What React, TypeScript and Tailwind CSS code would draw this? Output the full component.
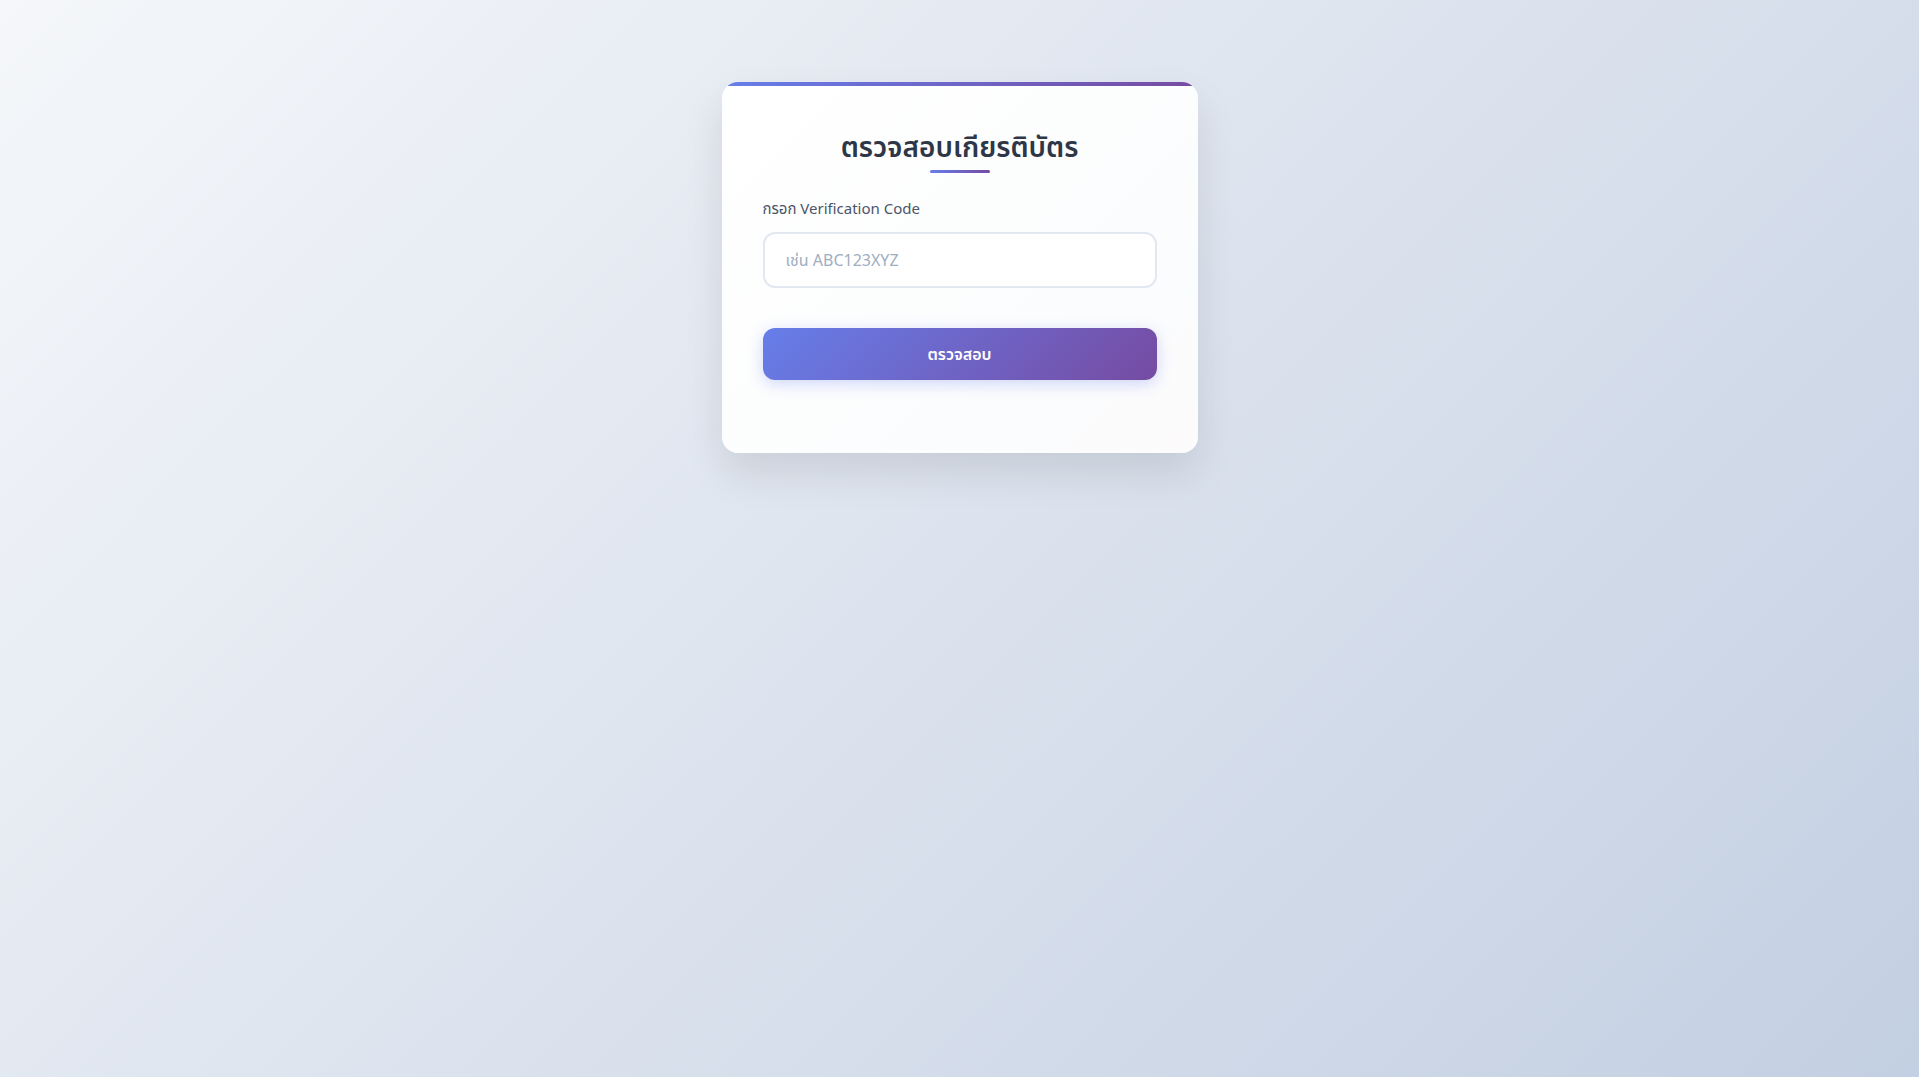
export default function App() {
    return (
        <main
            className="min-h-screen w-full bg-[linear-gradient(135deg,#f5f7fa_0%,#c3cfe2_100%)] pt-[82px]"
            style={{ fontFamily: '"Noto Sans", "Noto Sans Thai", "Noto Sans CJK SC", sans-serif' }}
        >
            <section className="mx-auto w-[476px] overflow-hidden rounded-2xl bg-[linear-gradient(135deg,#ffffff_0%,#fbfcfd_80%,#fdfbfc_100%)] shadow-[0_20px_40px_rgba(0,0,0,0.1)]">
                <div className="h-1 bg-[linear-gradient(90deg,#667eea,#764ba2)]" />

                <div className="px-[41px] pt-[42px] pb-[73px]">
                    <h1 className="text-center text-[28px] leading-[36px] font-semibold text-[#2d3748]">
                        ตรวจสอบเกียรติบัตร
                    </h1>
                    <div className="mx-auto mt-[6px] h-[3px] w-[60px] rounded-full bg-[linear-gradient(90deg,#667eea,#764ba2)]" />

                    <label
                        htmlFor="code"
                        className="mt-[25px] block text-[15px] leading-[20px] font-normal text-[#4a5568]"
                    >
                        กรอก Verification Code
                    </label>
                    <input
                        id="code"
                        type="text"
                        placeholder="เช่น ABC123XYZ"
                        className="mt-[14px] block h-[56px] w-full rounded-xl border-2 border-[#e2e8f0] bg-white px-[21px] text-base text-[#2d3748] outline-none placeholder:text-[#a0aec0]"
                    />

                    <button
                        type="button"
                        className="mt-[40px] flex h-[52px] w-full items-center justify-center rounded-xl bg-[linear-gradient(135deg,#667eea_0%,#764ba2_100%)] text-base font-semibold text-white shadow-[0_4px_15px_rgba(102,126,234,0.3)]"
                    >
                        ตรวจสอบ
                    </button>
                </div>
            </section>
        </main>
    );
}
